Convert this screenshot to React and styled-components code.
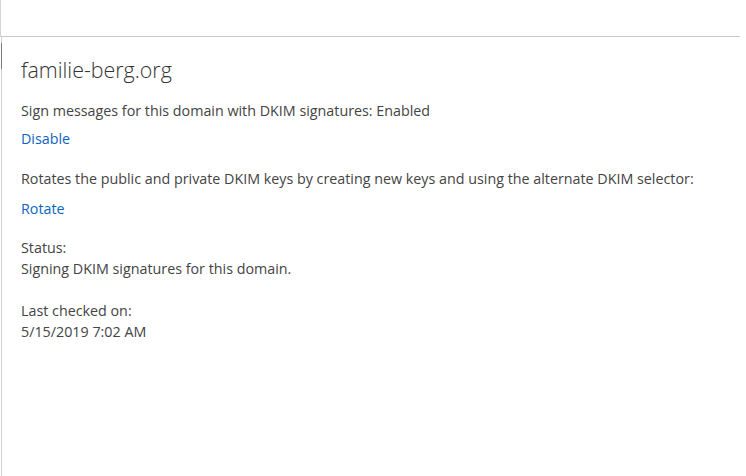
import React from "react";
import styled, { createGlobalStyle } from "styled-components";

const Global = createGlobalStyle`
  html, body { margin: 0; padding: 0; background: #fff; }
  body { font-family: "Open Sans", "Noto Sans", sans-serif; color: #444; }
`;

const Page = styled.div`
  width: 746px;
  height: 476px;
  display: flex;
  flex-direction: column;
  overflow: hidden;
`;

const TopBar = styled.div`
  width: 739px;
  height: 36px;
  border-left: 1px solid #d4d4d4;
  border-bottom: 1px solid #c8c8c8;
  flex: none;
`;

const Panel = styled.div`
  position: relative;
  flex: 1;
  margin-left: 1px;
  border-left: 1px solid #d0d0d0;
  padding: 19px 0 0 19px;
  display: flex;
  flex-direction: column;
  &::before {
    content: "";
    position: absolute;
    left: -1px;
    top: 6px;
    width: 1px;
    height: 26px;
    background: #777;
  }
`;

const Title = styled.h1`
  margin: 0 0 16px;
  font-size: 21.4px;
  font-weight: 300;
  line-height: 28px;
  color: #333;
`;

const Text = styled.p`
  margin: 0;
  font-size: 14.3px;
  line-height: 21px;
  color: #444;
`;

const Section = styled.div`
  display: flex;
  flex-direction: column;
  gap: ${(p) => p.$gap || 0}px;
  margin-bottom: ${(p) => p.$mb || 0}px;
`;

const Link = styled.a`
  font-size: 14.3px;
  line-height: 21px;
  color: #0c64c0;
  text-decoration: none;
  cursor: pointer;
  align-self: flex-start;
`;

export default function App() {
  return (
    <>
      <Global />
      <Page>
        <TopBar />
        <Panel>
          <Title>familie-berg.org</Title>
          <Section $gap={7} $mb={19}>
            <Text>Sign messages for this domain with DKIM signatures: Enabled</Text>
            <Link>Disable</Link>
          </Section>
          <Section $gap={9} $mb={18}>
            <Text>Rotates the public and private DKIM keys by creating new keys and using the alternate DKIM selector:</Text>
            <Link>Rotate</Link>
          </Section>
          <Section $mb={21}>
            <Text>Status:</Text>
            <Text>Signing DKIM signatures for this domain.</Text>
          </Section>
          <Section>
            <Text>Last checked on:</Text>
            <Text>5/15/2019 7:02 AM</Text>
          </Section>
        </Panel>
      </Page>
    </>
  );
}
